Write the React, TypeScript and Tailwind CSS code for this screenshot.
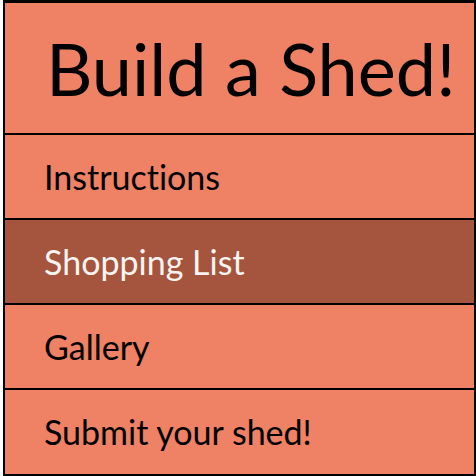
const links = ['Instructions', 'Shopping List', 'Gallery', 'Submit your shed!']

export default function App() {
  const active = 'Shopping List'

  return (
    <div className="h-[476px] w-[476px] overflow-hidden bg-white pl-[3px] font-['Lato',sans-serif] [font-variant-ligatures:none]">
      <nav className="flex w-[473px] flex-col border-x-2 border-t-[3px] border-b-2 border-black bg-[#ef8164]">
        <header className="flex h-[132px] items-center border-b-2 border-black pl-[41px]">
          <h1 className="text-[72px] leading-none text-black">Build a Shed!</h1>
        </header>
        {links.map((link, i) => (
          <a
            key={link}
            href="#"
            className={`flex items-center pl-[39px] text-[34px] leading-none ${
              i < links.length - 1 ? 'h-[85px] border-b-2 border-black' : 'h-[84px]'
            } ${link === active ? 'bg-[#a5543e] text-[#f7f3f1]' : 'text-black'}`}
          >
            {link}
          </a>
        ))}
      </nav>
    </div>
  )
}
